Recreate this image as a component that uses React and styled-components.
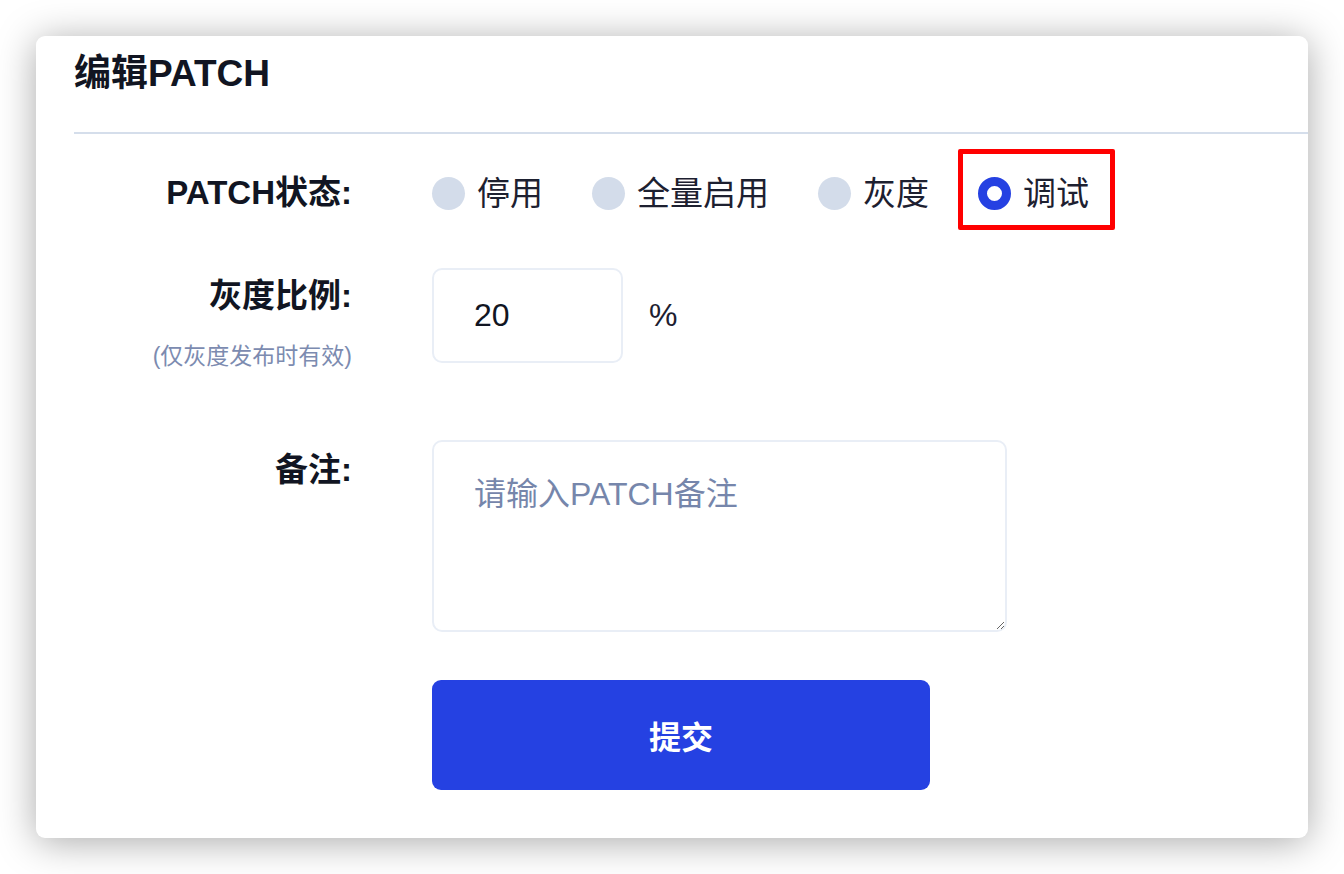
import { useState } from "react";
import styled, { createGlobalStyle } from "styled-components";

const GlobalStyle = createGlobalStyle`
    html, body {
        margin: 0;
        padding: 0;
        background: #ffffff;
    }
    body {
        font-family: "Liberation Sans", "Noto Sans CJK SC", sans-serif;
    }
`;

const options = [
    { value: "off", label: "停用" },
    { value: "full", label: "全量启用" },
    { value: "gray", label: "灰度" },
    { value: "debug", label: "调试" },
];

export default function App() {
    const [status, setStatus] = useState("debug");
    const [ratio, setRatio] = useState("20");
    const [note, setNote] = useState("");

    return (
        <>
            <GlobalStyle />
            <Page>
                <Card>
                    <Header>
                        <Title>编辑PATCH</Title>
                    </Header>
                    <Form onSubmit={(e) => e.preventDefault()}>
                        <Row>
                            <LabelCol>
                                <Label $tall={false}>PATCH状态:</Label>
                            </LabelCol>
                            <RadioGroup>
                                {options.map((o) => (
                                    <RadioOption
                                        key={o.value}
                                        $marked={o.value === "debug"}
                                        onClick={() => setStatus(o.value)}
                                    >
                                        <RadioDot $checked={status === o.value} />
                                        <RadioText>{o.label}</RadioText>
                                    </RadioOption>
                                ))}
                            </RadioGroup>
                        </Row>

                        <Row $top={58}>
                            <LabelCol>
                                <Label $tall>灰度比例:</Label>
                                <Hint>(仅灰度发布时有效)</Hint>
                            </LabelCol>
                            <RatioWrap>
                                <RatioInput
                                    value={ratio}
                                    onChange={(e) => setRatio(e.target.value)}
                                />
                                <Percent>%</Percent>
                            </RatioWrap>
                        </Row>

                        <Row $top={70}>
                            <LabelCol>
                                <Label $tall $offset={10}>备注:</Label>
                            </LabelCol>
                            <NoteArea
                                placeholder="请输入PATCH备注"
                                value={note}
                                onChange={(e) => setNote(e.target.value)}
                            />
                        </Row>

                        <Row $top={48}>
                            <LabelCol />
                            <SubmitBtn type="submit">提交</SubmitBtn>
                        </Row>
                    </Form>
                </Card>
            </Page>
        </>
    );
}

const Page = styled.div`
    padding: 36px;
    min-height: 874px;
    box-sizing: border-box;
`;

const Card = styled.div`
    background: #ffffff;
    border-radius: 9px;
    box-shadow: 0 4px 38px rgba(0, 0, 0, 0.34);
    padding: 0 0 48px 38px;
`;

const Header = styled.div`
    padding: 20px 0 40px;
    border-bottom: 2px solid #d5deeb;
`;

const Title = styled.h1`
    margin: 0;
    font-size: 37px;
    line-height: 36px;
    font-weight: 700;
    color: #111522;
`;

const Form = styled.form`
    padding-top: 43px;
    display: flex;
    flex-direction: column;
`;

const Row = styled.div`
    display: flex;
    align-items: flex-start;
    gap: 80px;
    margin-top: ${(p) => p.$top || 0}px;
`;

const LabelCol = styled.div`
    width: 278px;
    flex-shrink: 0;
    display: flex;
    flex-direction: column;
    align-items: flex-end;
`;

const Label = styled.div`
    font-size: 33px;
    font-weight: 700;
    color: #111522;
    line-height: ${(p) => (p.$tall ? "40px" : "32px")};
    margin-top: ${(p) => (p.$offset !== undefined ? p.$offset : p.$tall ? 8 : 0)}px;
    white-space: nowrap;
`;

const Hint = styled.div`
    margin-top: 26px;
    font-size: 23px;
    line-height: 28px;
    color: #7c8bb0;
    white-space: nowrap;
`;

const RadioGroup = styled.div`
    display: flex;
    align-items: center;
    gap: 49px;
`;

const RadioOption = styled.label`
    position: relative;
    display: flex;
    align-items: center;
    gap: 12px;
    cursor: pointer;

    &::after {
        content: "";
        display: ${(p) => (p.$marked ? "block" : "none")};
        position: absolute;
        left: -20px;
        right: -26px;
        top: -28px;
        bottom: -20px;
        border: 5px solid #ff0000;
        border-radius: 2px;
        pointer-events: none;
    }
`;

const RadioDot = styled.span`
    width: 33px;
    height: 33px;
    border-radius: 50%;
    box-sizing: border-box;
    background: ${(p) => (p.$checked ? "#ffffff" : "#d3dcea")};
    border: ${(p) => (p.$checked ? "9px solid #2541e2" : "none")};
    flex-shrink: 0;
`;

const RadioText = styled.span`
    font-size: 33px;
    line-height: 33px;
    color: #1d2030;
`;

const RatioWrap = styled.div`
    display: flex;
    align-items: center;
    gap: 26px;
`;

const RatioInput = styled.input`
    width: 191px;
    height: 95px;
    box-sizing: border-box;
    border: 2px solid #e9eef6;
    border-radius: 10px;
    padding: 0 0 0 40px;
    font-family: "Liberation Sans", "Noto Sans CJK SC", sans-serif;
    font-size: 32px;
    color: #111522;
    outline: none;
`;

const Percent = styled.span`
    font-size: 32px;
    color: #1d2030;
`;

const NoteArea = styled.textarea`
    width: 575px;
    height: 192px;
    box-sizing: border-box;
    border: 2px solid #e9eef6;
    border-radius: 10px;
    padding: 32px 40px;
    font-family: "Liberation Sans", "Noto Sans CJK SC", sans-serif;
    font-size: 32px;
    line-height: 40px;
    color: #111522;
    outline: none;
    resize: both;

    &::placeholder {
        color: #7686ab;
    }
`;

const SubmitBtn = styled.button`
    width: 498px;
    height: 110px;
    border: none;
    border-radius: 9px;
    background: #2541e2;
    color: #ffffff;
    font-family: "Liberation Sans", "Noto Sans CJK SC", sans-serif;
    font-size: 32px;
    font-weight: 700;
    cursor: pointer;
`;
